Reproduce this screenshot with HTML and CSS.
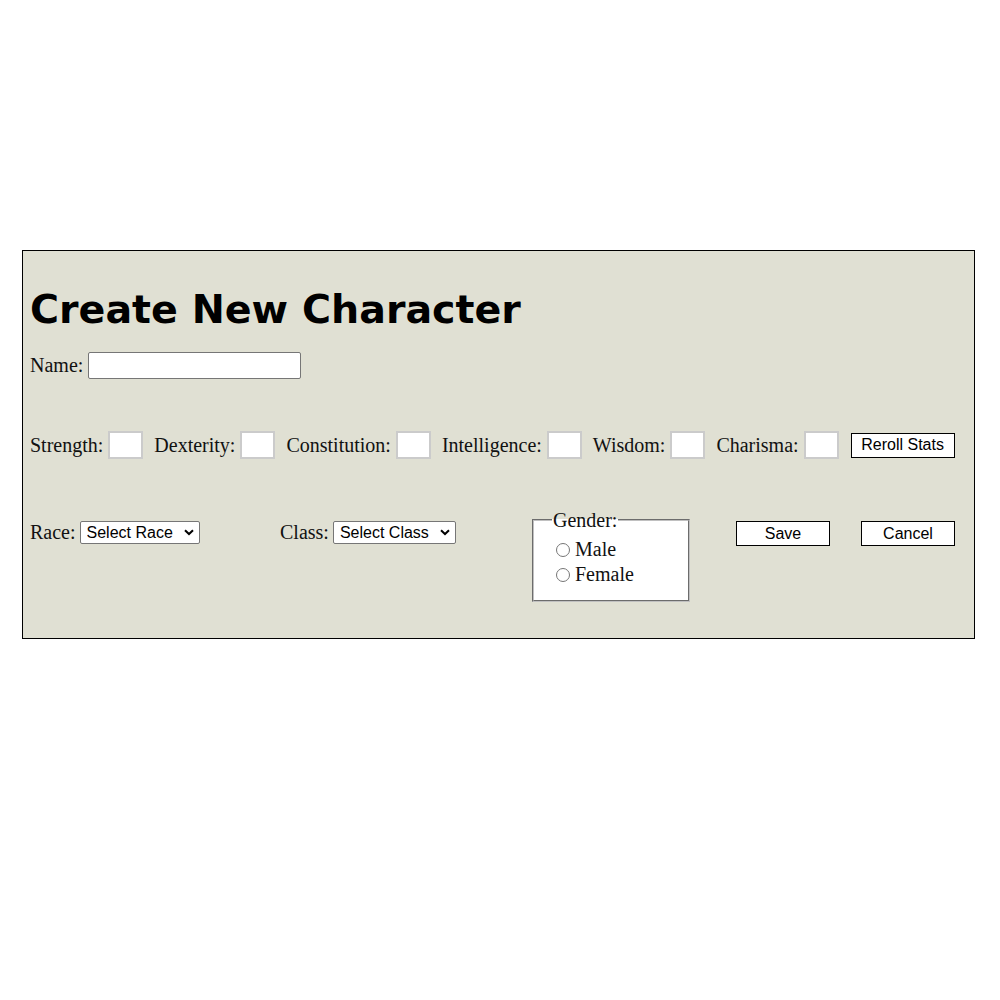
FILE: index.html
```html
<!DOCTYPE html>
<html>
<head>
<meta charset="utf-8">
<link rel="stylesheet" href="styles.css">
</head>
<body>
<div class="page">
  <form class="panel">
    <h1 class="title">Create New Character</h1>
    <div class="row name-row">
      <label class="lbl">Name:</label>
      <input class="name-input" type="text">
    </div>
    <div class="row stats-row">
      <span class="stat"><label class="lbl">Strength:</label><input class="stat-input" type="text"></span>
      <span class="stat"><label class="lbl">Dexterity:</label><input class="stat-input" type="text"></span>
      <span class="stat"><label class="lbl">Constitution:</label><input class="stat-input" type="text"></span>
      <span class="stat"><label class="lbl">Intelligence:</label><input class="stat-input" type="text"></span>
      <span class="stat"><label class="lbl">Wisdom:</label><input class="stat-input" type="text"></span>
      <span class="stat"><label class="lbl">Charisma:</label><input class="stat-input" type="text"></span>
      <button class="btn reroll" type="button">Reroll Stats</button>
    </div>
    <div class="bottom-row">
      <div class="cell"><label class="lbl">Race:</label>
        <span class="sel-wrap race"><select class="sel"><option>Select Race</option></select><svg class="chev" width="10" height="7" viewBox="0 0 10 7"><path d="M1 1.2 L5 5 L9 1.2" fill="none" stroke="#000" stroke-width="2"/></svg></span>
      </div>
      <div class="cell"><label class="lbl">Class:</label>
        <span class="sel-wrap klass"><select class="sel"><option>Select Class</option></select><svg class="chev" width="10" height="7" viewBox="0 0 10 7"><path d="M1 1.2 L5 5 L9 1.2" fill="none" stroke="#000" stroke-width="2"/></svg></span>
      </div>
      <fieldset class="gender">
        <legend class="legend">Gender:</legend>
        <label class="radio"><input type="radio" name="g">Male</label>
        <label class="radio"><input type="radio" name="g">Female</label>
      </fieldset>
      <div class="cell"><button class="btn action" type="button">Save</button></div>
      <div class="cell"><button class="btn action" type="button">Cancel</button></div>
    </div>
  </form>
</div>
</body>
</html>
```
FILE: styles.css
```css
html, body {
  margin: 0;
  padding: 0;
  background: #ffffff;
}
body {
  font-family: "Liberation Serif", "Times New Roman", serif;
  font-size: 20px;
  color: #111;
}
.page {
  padding: 250px 25px 0 22px;
}
.panel {
  border: 1px solid #000;
  background: #e0e0d3;
  padding: 20px 7px 0 7px;
  height: 367px;
}
.title {
  font-family: "DejaVu Sans", Verdana, sans-serif;
  font-weight: bold;
  font-size: 39.6px;
  margin: 15px 0 20px 0;
  line-height: 46px;
  color: #000;
}
.row {
  display: flex;
  align-items: center;
}
.lbl {
  margin-right: 5px;
}
.name-input {
  width: 207px;
  height: 23px;
  border: 1px solid #767676;
  border-radius: 2px;
  padding: 1px 2px;
  box-sizing: content-box;
  background: #fff;
}
.stats-row {
  margin-top: 52px;
  gap: 11px;
}
.stat {
  display: flex;
  align-items: center;
}
.stat-input {
  width: 31px;
  height: 24px;
  border: 2px solid #cbcbcb;
  padding: 0;
  background: #fff;
  box-sizing: content-box;
}
.btn {
  font-family: "Liberation Sans", Arial, sans-serif;
  font-size: 16px;
  background: #fff;
  border: 1px solid #000;
  color: #000;
  border-radius: 0;
  padding: 0;
  height: 25px;
}
.reroll {
  width: 104px;
  margin-left: 1px;
}
.bottom-row {
  display: grid;
  grid-template-columns: 250px 252px 204px 125px auto;
  margin-top: 59px;
  align-items: start;
}
.cell {
  display: flex;
  align-items: center;
  padding-top: 3px;
}
.cell .lbl {
  margin-right: 4px;
}
.sel-wrap {
  position: relative;
  display: inline-block;
  height: 23px;
}
.sel-wrap.race .sel {
  width: 120px;
}
.sel-wrap.klass .sel {
  width: 123px;
}
.sel {
  appearance: none;
  -webkit-appearance: none;
  font-family: "Liberation Sans", Arial, sans-serif;
  font-size: 16px;
  height: 23px;
  border: 1px solid #767676;
  border-radius: 2px;
  background: #fff;
  color: #000;
  padding: 0 0 0 6px;
  margin: 0;
  box-sizing: border-box;
  display: block;
}
.chev {
  position: absolute;
  right: 6px;
  top: 8px;
  pointer-events: none;
}
.gender {
  margin: -9px 0 0 0;
  width: 158px;
  box-sizing: border-box;
  background: #fff;
  border: 2px groove #c0c0c0;
  padding: 6px 10px 13px 22px;
  display: flex;
  flex-direction: column;
}
.legend {
  padding: 0 1px;
  font-size: 20px;
  line-height: 22px;
  margin-left: -4px;
}
.radio {
  display: flex;
  align-items: center;
  line-height: 25px;
  font-size: 20px;
}
.radio input {
  margin: 0 5px 0 0;
  width: 14px;
  height: 14px;
}
.action {
  width: 94px;
}
```
